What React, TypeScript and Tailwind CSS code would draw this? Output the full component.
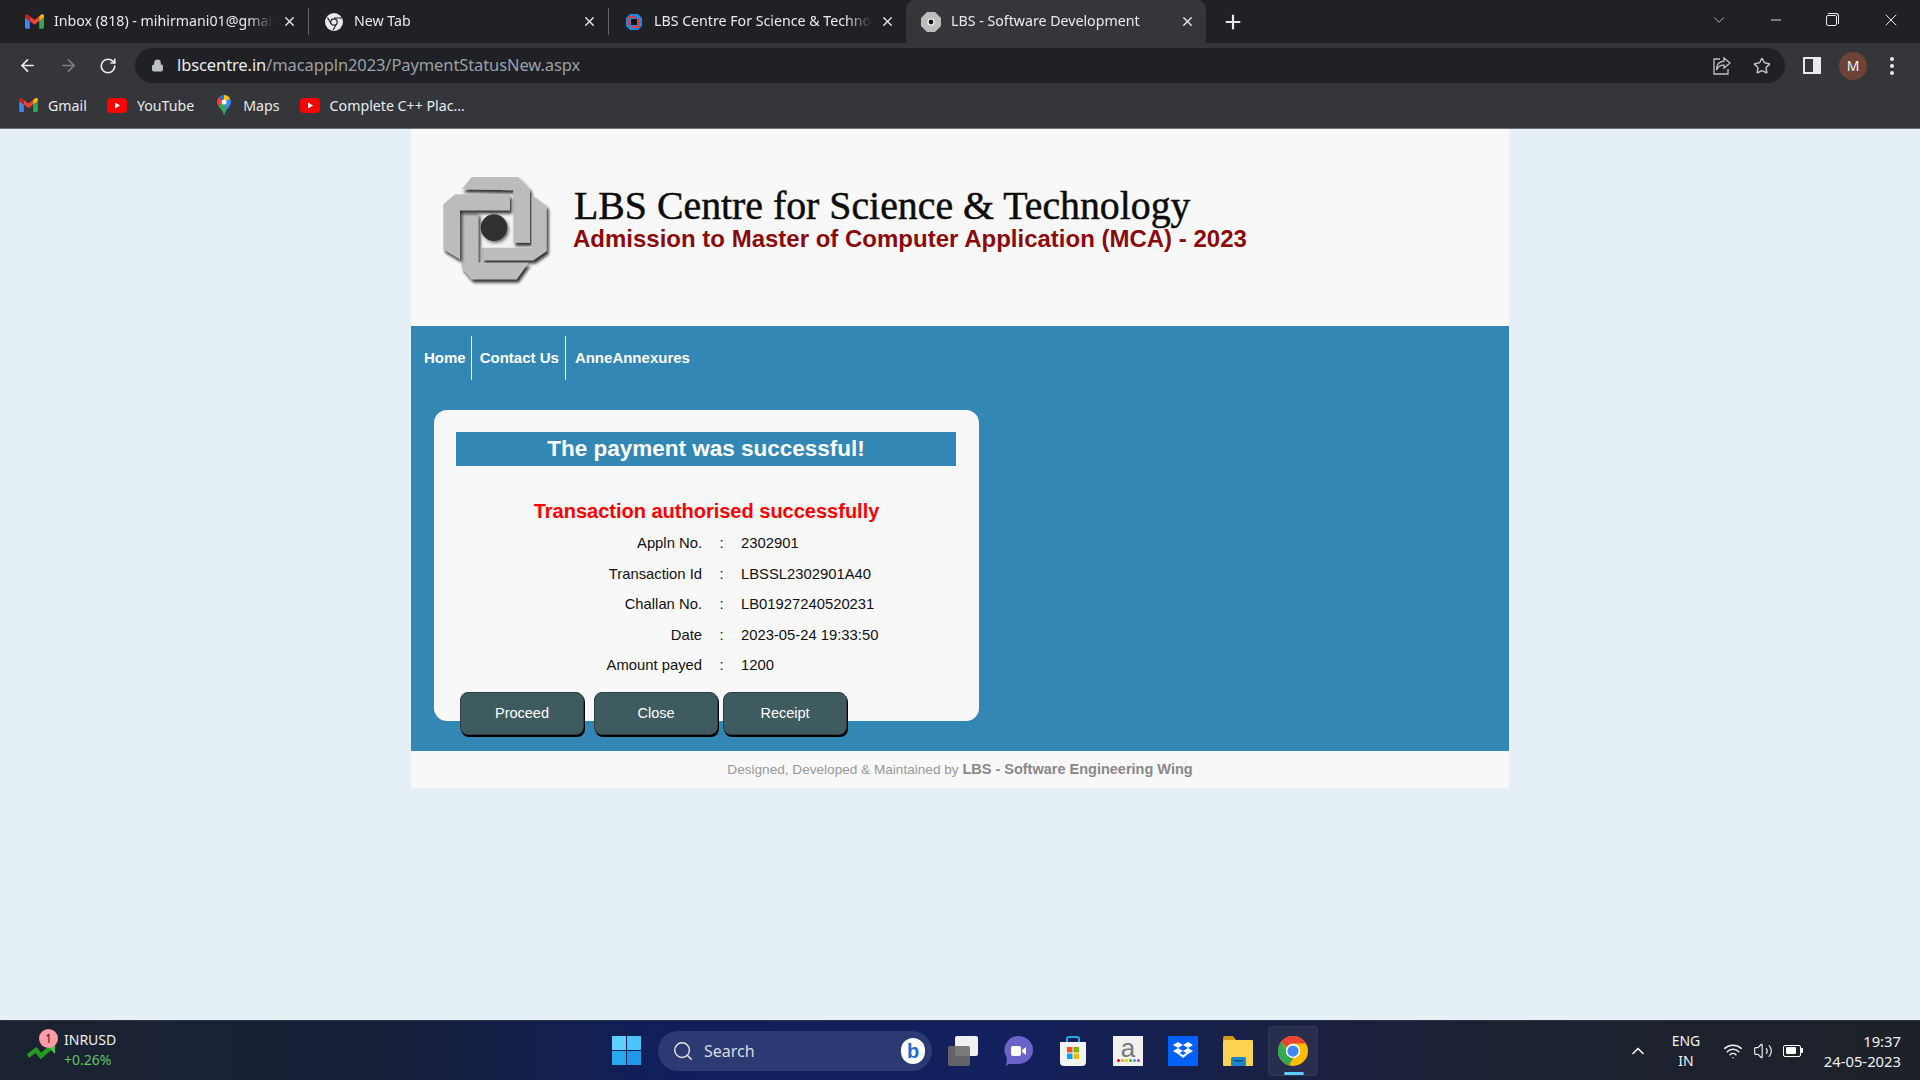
import React from 'react';
import { ArrowLeft, ArrowRight, RotateCw, Lock, X, Plus, ChevronDown, ChevronUp, Minus, Star, Search, Wifi, Volume2 } from 'lucide-react';

const uiFont = "font-['Noto_Sans',sans-serif]";
const arial = "font-['Liberation_Sans',Arial,sans-serif]";

const GmailIcon = ({ className }: { className?: string }) => (
  <svg viewBox="0 0 24 18" className={className}>
    <path d="M1.6 18A1.6 1.6 0 0 1 0 16.4V4l6 4.5V18z" fill="#4285f4" />
    <path d="M18 18V8.5L24 4v12.4a1.6 1.6 0 0 1-1.6 1.6z" fill="#34a853" />
    <path d="M18 2.5 12 7 6 2.5v6L12 13l6-4.5z" fill="#ea4335" />
    <path d="M18 2.5V8.500L24 4V2c0-2-2.200-2.700-3.600-1.600z" fill="#fbbc04" />
    <path d="M0 4V2C0 0 2.200-.7 3.600.4L6 2.500v6z" fill="#c5221f" />
  </svg>
);

const YoutubeIcon = () => (
  <svg viewBox="0 0 20 15" className="w-[20px] h-[15px]">
    <rect width="20" height="15" rx="4" fill="#f00" />
    <path d="M8 4.500 13 7.500 8 10.500z" fill="#fff" />
  </svg>
);

const MapsIcon = () => (
  <span className="flex justify-center w-[18px]">
    <svg viewBox="0 0 14 20" className="w-[14px] h-[20px]">
      <path d="M7 0a7 7 0 0 1 7 7c0 4-5 7-7 13z" fill="#4285f4" />
      <path d="M7 0a7 7 0 0 0-5 2.100L7 7z" fill="#1a73e8" />
      <path d="M2 2.100A7 7 0 0 0 0 7c0 1.500.6 2.700 1.400 4L7 7z" fill="#ea4335" />
      <path d="M1.400 11C3 13.500 6 16 7 20c.4-1.600 1.200-3 2-4.200L7 7z" fill="#34a853" />
      <path d="M7 0a7 7 0 0 1 6 3.500L7 7z" fill="#fbbc04" />
      <circle cx="7" cy="7" r="2.500" fill="#fff" />
    </svg>
  </span>
);

const ChromeLogo = ({ className }: { className?: string }) => (
  <svg viewBox="0 0 48 48" className={className}>
    <circle cx="24" cy="24" r="24" fill="#fbbc04" />
    <path d="M24 0a24 24 0 0 1 20.800 12H24a12 12 0 0 0-11 7.200L5.500 8.500A24 24 0 0 1 24 0z" fill="#ea4335" />
    <path d="M5.500 8.500 16 26.500a10 10 0 0 0 8 9.500L17 47A24 24 0 0 1 5.500 8.500z" fill="#34a853" />
    <circle cx="24" cy="24" r="11.500" fill="#fff" />
    <circle cx="24" cy="24" r="9" fill="#4285f4" />
  </svg>
);

const WhiteChrome = () => (
  <svg viewBox="0 0 18 18" className="w-[18px] h-[18px]">
    <circle cx="9" cy="9" r="9" fill="#e8eaed" />
    <circle cx="9" cy="9" r="3.800" fill="#202124" />
    <circle cx="9" cy="9" r="2.600" fill="#e8eaed" />
    <path d="M9 5h8M6 10.500 2.500 4.500M11.500 11 8 17" stroke="#202124" strokeWidth="1.200" />
  </svg>
);

const LbsFavicon = () => (
  <svg viewBox="0 0 18 18" className="w-[18px] h-[18px]">
    <path d="M5 1h8l4 4v8l-4 4H5l-4-4V5z" fill="#1e88e5" />
    <path d="M5 3h6v2H5v8H3V5z" fill="#e53935" />
    <path d="M13 5h2v8l-2 2H7v-2h6z" fill="#e53935" />
    <rect x="6" y="6" width="6" height="6" fill="#111" />
  </svg>
);

const LbsTabIcon = () => (
  <svg viewBox="0 0 20 20" className="w-[20px] h-[20px]">
    <path d="M6 0h8l6 6v8l-6 6H6l-6-6V6z" fill="#bdbdbd" />
    <circle cx="10" cy="10" r="3.500" fill="#fff" />
    <circle cx="10" cy="10" r="2.400" fill="#111" />
  </svg>
);

const LbsLogo = () => (
  <svg viewBox="0 0 390 390" className="w-[130px] h-[130px] shrink-0">
    <defs>
      <filter id="soft" x="-20%" y="-20%" width="150%" height="150%">
        <feGaussianBlur stdDeviation="5" />
      </filter>
      <filter id="arm" x="-20%" y="-20%" width="150%" height="150%">
        <feDropShadow dx="6" dy="10" stdDeviation="4" floodColor="#111" floodOpacity="0.85" />
      </filter>
    </defs>
    <rect x="145" y="150" width="105" height="110" fill="#f2f2f2" />
    <g fill="#bcbcbc" filter="url(#arm)">
      <path d="M95 85 125 48H265L300 85V245H250V88Z" />
    </g>
    <g fill="#bcbcbc" filter="url(#arm)">
      <path d="M155 260H305V102L350 135V270L310 298H155Z" />
    </g>
    <g fill="#bcbcbc" filter="url(#arm)">
      <path d="M95 155H145V305H295L260 355H125L95 320Z" />
    </g>
    <g fill="#bcbcbc" filter="url(#arm)">
      <path d="M40 130 75 100H240V148H90V295L40 265Z" />
    </g>
    <circle cx="197" cy="206" r="40" fill="#777" filter="url(#soft)" />
    <circle cx="192" cy="200" r="40" fill="#333031" />
  </svg>
);

interface TabProps {
  icon: React.ReactNode;
  title: string;
  active?: boolean;
  width: string;
}

const Tab: React.FC<TabProps> = ({ icon, title, active, width }) => (
  <div className={`relative flex items-center h-[43px] pl-[15px] pr-[11px] ${width} ${active ? 'bg-[#35363a] rounded-t-[9px] mt-0' : ''}`}>
    <span className="w-[20px] flex justify-center shrink-0">{icon}</span>
    <span className="ml-[10px] mb-[2px] flex-1 min-w-0 overflow-hidden whitespace-nowrap text-[14.2px] text-[#e8eaed] [mask-image:linear-gradient(to_right,#000_88%,transparent)]">{title}</span>
    <X className="w-[15px] h-[15px] text-[#e8eaed] shrink-0 ml-[8px]" strokeWidth={2.2} />
  </div>
);

const Divider = () => <div className="w-px h-[27px] bg-[#5f6368] shrink-0" />;

const Bookmark = ({ icon, label, gap }: { icon: React.ReactNode; label: string; gap: string }) => (
  <div className={`flex items-center gap-[10px] ${gap}`}>
    {icon}
    <span className="text-[14.2px] text-[#e8eaed] whitespace-nowrap">{label}</span>
  </div>
);

const BrowserChrome = () => (
  <div className={uiFont}>
    {/* Tabs */}
    <div className="flex items-center h-[43px] bg-[#202124] pl-[9px]">
      <Tab icon={<GmailIcon className="w-[19px] h-[15px]" />} title="Inbox (818) - mihirmani01@gmail.com" width="w-[299px]" />
      <Divider />
      <Tab icon={<WhiteChrome />} title="New Tab" width="w-[299px]" />
      <Divider />
      <Tab icon={<LbsFavicon />} title="LBS Centre For Science & Technology" width="w-[297px]" />
      <Tab icon={<LbsTabIcon />} title="LBS - Software Development" active width="w-[300px]" />
      <Plus className="w-[22px] h-[22px] text-[#e8eaed] ml-[16px]" strokeWidth={2.4} />
      <div className="flex-1" />
      <ChevronDown className="w-[18px] h-[18px] text-[#bdc1c6] mr-[40px] mb-[4px]" strokeWidth={1.2} />
      <Minus className="w-[16px] h-[16px] text-[#e8eaed] mr-[42px] mb-[4px]" strokeWidth={1.4} />
      <div className="relative w-[13px] h-[13px] mr-[42px] mb-[4px]">
        <div className="absolute left-0 bottom-0 w-[11px] h-[11px] border border-[#e8eaed] rounded-[2px]" />
        <div className="absolute right-0 top-0 w-[11px] h-[11px] border-t border-r border-[#e8eaed] rounded-tr-[3px]" />
      </div>
      <X className="w-[20px] h-[20px] text-[#e8eaed] mr-[19px] mb-[4px]" strokeWidth={1.2} />
    </div>
    {/* Toolbar */}
    <div className="flex items-center h-[45px] bg-[#35363a] pl-[18px]">
      <ArrowLeft className="w-[19px] h-[19px] text-[#e8eaed]" strokeWidth={2.2} />
      <ArrowRight className="w-[19px] h-[19px] text-[#7c7f84] ml-[22px]" strokeWidth={2.2} />
      <RotateCw className="w-[18px] h-[18px] text-[#e8eaed] ml-[21px]" strokeWidth={2.2} />
      <div className="flex items-center w-[1650px] h-[35px] ml-[18px] rounded-full bg-[#202124] pl-[16px] pr-[14px]">
        <Lock className="w-[13px] h-[13px] text-[#bdc1c6] fill-[#bdc1c6]" />
        <span className="ml-[13px] text-[16.5px] text-[#e8eaed] tracking-[-0.1px]">
          lbscentre.in<span className="text-[#9aa0a6]">/macappln2023/PaymentStatusNew.aspx</span>
        </span>
        <div className="flex-1" />
        <svg viewBox="0 0 20 20" className="w-[20px] h-[20px] text-[#bdc1c6]" fill="none" stroke="currentColor" strokeWidth="1.300">
          <path d="M8 3H2v15h14v-5" />
          <path d="M12 2l6 5-6 5V9.200C8.500 9.200 6 10.500 4.500 14c0-5 2.500-8.500 7.500-8.800z" />
        </svg>
        <Star className="w-[18px] h-[18px] text-[#bdc1c6] ml-[21px]" strokeWidth={2} />
      </div>
      <div className="flex w-[18px] h-[17px] bg-[#e8eaed] ml-[18px] p-[2px] pr-[8px]">
        <div className="flex-1 bg-[#35363a]" />
      </div>
      <div className="flex items-center justify-center w-[28px] h-[28px] rounded-full bg-[#6d4237] text-[#f1f3f4] text-[14px] ml-[18px]">M</div>
      <div className="flex flex-col gap-[3px] ml-[23px]">
        <span className="w-[4px] h-[4px] rounded-full bg-[#e8eaed]" />
        <span className="w-[4px] h-[4px] rounded-full bg-[#e8eaed]" />
        <span className="w-[4px] h-[4px] rounded-full bg-[#e8eaed]" />
      </div>
    </div>
    {/* Bookmarks */}
    <div className="flex items-center h-[41px] bg-[#35363a] pl-[19px] pb-[5px] border-b border-[#6e7175]">
      <Bookmark icon={<GmailIcon className="w-[19px] h-[14px]" />} label="Gmail" gap="mr-[20px]" />
      <Bookmark icon={<YoutubeIcon />} label="YouTube" gap="mr-[21px]" />
      <Bookmark icon={<MapsIcon />} label="Maps" gap="mr-[20px]" />
      <Bookmark icon={<YoutubeIcon />} label="Complete C++ Plac..." gap="" />
    </div>
  </div>
);

const rows = [
  ['Appln No.', '2302901'],
  ['Transaction Id', 'LBSSL2302901A40'],
  ['Challan No.', 'LB01927240520231'],
  ['Date', '2023-05-24 19:33:50'],
  ['Amount payed', '1200'],
];

const PageButton = ({ label, className }: { label: string; className?: string }) => (
  <button className={`w-[124px] h-[43px] pt-[2px] bg-[#3e5b5f] rounded-[8px] border border-[#2c3f42] shadow-[1px_2px_0_#000] text-white text-[14.5px] ${className ?? ''}`}>
    {label}
  </button>
);

const Page = () => (
  <div className={`flex-1 bg-[#e4f0f6] ${arial}`}>
    <div className="w-[1098px] ml-[411px]">
      {/* Header */}
      <div className="flex items-start h-[197px] bg-[#f8f8f8] pl-[19px] pt-[32px]">
        <LbsLogo />
        <div className="ml-[13px] mt-[25px]">
          <div className="font-['Liberation_Serif',serif] text-[39.8px] leading-[40px] text-[#0c0c0c] ml-[1px] [-webkit-text-stroke:0.5px_#0c0c0c] whitespace-nowrap">LBS Centre for Science &amp; Technology</div>
          <div className="font-bold text-[24px] leading-[26px] text-[#8b0a0a] whitespace-nowrap">Admission to Master of Computer Application (MCA) - 2023</div>
        </div>
      </div>
      {/* Nav + content */}
      <div className="h-[425px] bg-[#3387b5] pt-[10px]">
        <div className="flex h-[44px] items-center text-white font-bold text-[15px]">
          <div className="flex items-center h-full pl-[13px] pr-[5px] border-r border-white">Home</div>
          <div className="flex items-center h-full pl-[8px] pr-[6px] border-r border-white">Contact Us</div>
          <div className="pl-[9px]">AnneAnnexures</div>
        </div>
        <div className="w-[545px] h-[311px] ml-[23px] mt-[30px] bg-[#f8f8f8] rounded-[13px] pt-[22px]">
          <div className="h-[34px] ml-[22px] mr-[23px] bg-[#3387b5] text-center text-white font-bold text-[22.5px] leading-[33px]">The payment was successful!</div>
          <div className="mt-[32px] text-center text-[#ff0000] font-bold text-[20px] leading-[26px]">Transaction authorised successfully</div>
          <div className="mt-[4px] text-[14.8px] text-[#111]">
            {rows.map(([label, value]) => (
              <div key={label} className="grid grid-cols-[268px_39px_1fr] h-[30.5px] items-center">
                <span className="text-right">{label}</span>
                <span className="text-center">:</span>
                <span>{value}</span>
              </div>
            ))}
          </div>
          <div className="flex ml-[26px] mt-[11px]">
            <PageButton label="Proceed" className="mr-[10px]" />
            <PageButton label="Close" className="mr-[5px]" />
            <PageButton label="Receipt" />
          </div>
        </div>
      </div>
      {/* Footer */}
      <div className="flex items-center justify-center h-[37px] pt-[1px] bg-[#f8f8f8] text-[13.6px] text-[#999]">
        <span>Designed, Developed &amp; Maintained by <b className="text-[14.5px] text-[#888]">LBS - Software Engineering Wing</b></span>
      </div>
    </div>
  </div>
);

const StoreIcon = () => (
  <svg viewBox="0 0 30 30" className="w-[30px] h-[30px]">
    <path d="M9 7V3a2 2 0 0 1 2-2h8a2 2 0 0 1 2 2v4" fill="none" stroke="#27a9e6" strokeWidth="2" />
    <path d="M2 6h26v20a4 4 0 0 1-4 4H6a4 4 0 0 1-4-4z" fill="#f4f4f4" />
    <rect x="9" y="11" width="5.500" height="5.500" fill="#f25022" />
    <rect x="15.500" y="11" width="5.500" height="5.500" fill="#7fba00" />
    <rect x="9" y="17.500" width="5.500" height="5.500" fill="#00a4ef" />
    <rect x="15.500" y="17.500" width="5.500" height="5.500" fill="#ffb900" />
  </svg>
);

const AmazonIcon = () => (
  <div className={`relative flex justify-center w-[30px] h-[30px] bg-[#f1f1f1] ${arial}`}>
    <span className="text-[#777] text-[26px] leading-[24px]">a</span>
    <div className="absolute bottom-[4px] flex gap-[1px]">
      <span className="w-[3px] h-[3px] rounded-full bg-[#e00]" />
      <span className="w-[3px] h-[3px] rounded-full bg-[#f90]" />
      <span className="w-[3px] h-[3px] rounded-full bg-[#dc0]" />
      <span className="w-[3px] h-[3px] rounded-full bg-[#3b3]" />
      <span className="w-[3px] h-[3px] rounded-full bg-[#39f]" />
      <span className="w-[3px] h-[3px] rounded-full bg-[#a3e]" />
    </div>
  </div>
);

const Taskbar = () => (
  <div className={`flex items-center h-[60px] border-t border-[#2c3340] bg-[linear-gradient(to_right,#1b2330_0%,#18203a_20%,#101f5c_35%,#12205e_52%,#1a2040_68%,#1c2230_80%,#1d2129_100%)] ${uiFont}`}>
    {/* Ticker widget */}
    <div className="relative flex items-center w-[612px] h-full shrink-0 pl-[64px] pb-[2px]">
      <svg viewBox="0 0 28 15" className="absolute left-[27px] top-[23px] w-[28px] h-[15px]">
        <path d="M1 12 9 6l5 6 9-8" fill="none" stroke="#259a25" strokeWidth="4.500" />
        <path d="M18 0h10v10z" fill="#4cc23a" />
      </svg>
      <div className="absolute left-[39px] top-[8px] flex items-center justify-center w-[19px] h-[19px] rounded-full bg-[#ff9aa6] text-[#222] text-[12px]">1</div>
      <div className="leading-[20px]">
        <div className="text-[14px] text-[#f0f0f0]">INRUSD</div>
        <div className="text-[14px] text-[#5cc65c]">+0.26%</div>
      </div>
    </div>
    {/* Pinned apps */}
    <div className="flex items-center w-[706px] h-full shrink-0">
      <div className="grid grid-cols-2 gap-[1px] w-[29px] h-[29px] shrink-0">
        <span className="bg-[#5fd0fb]" />
        <span className="bg-[#4cc4f8]" />
        <span className="bg-[#2aa8ee]" />
        <span className="bg-[#1f98e6]" />
      </div>
      <div className="flex items-center w-[274px] h-[40px] ml-[17px] rounded-full bg-[#2b3a72] pl-[14px] pr-[7px] shrink-0">
        <Search className="w-[22px] h-[22px] text-[#e6e6e6]" strokeWidth={1.6} />
        <span className="ml-[10px] text-[16px] text-[#d8dbe6]">Search</span>
        <div className="flex-1" />
        <div className="flex items-center justify-center w-[24px] h-[26px] rounded-full bg-white">
          <span className={`text-[#1b6fd6] font-bold text-[20px] leading-[20px] ${arial}`}>b</span>
        </div>
      </div>
      <div className="relative w-[30px] h-[30px] ml-[16px] shrink-0">
        <div className="absolute right-0 top-0 w-[23px] h-[20px] bg-[#f0f0f0] rounded-[2px]" />
        <div className="absolute left-0 bottom-0 w-[22px] h-[20px] bg-[#6b6b6b]/90 rounded-[2px]" />
      </div>
      <svg viewBox="0 0 30 30" className="w-[30px] h-[30px] ml-[25px] shrink-0">
        <path d="M15 0a15 14 0 0 1 0 28H6l-3 2 1-8A14 14 0 0 1 15 0z" fill="#6a63c8" />
        <rect x="8" y="10" width="10" height="10" rx="2" fill="#fff" />
        <path d="M19 14l4-3v8l-4-3z" fill="#fff" />
      </svg>
      <div className="ml-[25px] shrink-0"><StoreIcon /></div>
      <div className="ml-[25px] shrink-0"><AmazonIcon /></div>
      <svg viewBox="0 0 30 30" className="w-[30px] h-[30px] ml-[25px] shrink-0">
        <rect width="30" height="30" fill="#0061fe" />
        <path d="M10 6l5 3-5 3-5-3zM20 6l5 3-5 3-5-3zM10 12l5 3-5 3-5-3zM20 12l5 3-5 3-5-3zM15 19l5-3 0 2-5 4-5-4 0-2z" fill="#fff" />
      </svg>
      <svg viewBox="0 0 30 30" className="w-[30px] h-[30px] ml-[25px] shrink-0">
        <path d="M0 2a2 2 0 0 1 2-2h8l3 4H0z" fill="#d39a14" />
        <rect y="4" width="30" height="26" rx="1" fill="#fbd251" />
        <rect x="8" y="21" width="15" height="9" rx="1.500" fill="#1b85c9" />
        <rect x="11" y="24" width="9" height="1.500" fill="#0c4f80" />
      </svg>
      <div className="relative flex items-center justify-center w-[50px] h-[50px] ml-[15px] rounded-[4px] bg-[#ffffff10] border border-[#ffffff0c] shrink-0">
        <ChromeLogo className="w-[30px] h-[30px]" />
        <div className="absolute left-[15px] bottom-[0px] w-[20px] h-[3px] rounded-full bg-[#60cdff]" />
      </div>
    </div>
    {/* Tray */}
    <div className="flex items-center flex-1 text-[#f0f0f0]">
      <ChevronUp className="w-[20px] h-[20px] ml-[310px]" strokeWidth={2} />
      <div className="ml-[23px] w-[30px] text-center text-[14px] leading-[20px]">
        <div>ENG</div>
        <div>IN</div>
      </div>
      <Wifi className="w-[20px] h-[20px] ml-[22px]" strokeWidth={1.8} />
      <Volume2 className="w-[20px] h-[20px] ml-[10px]" strokeWidth={1.4} />
      <div className="flex items-center ml-[10px]">
        <div className="w-[18px] h-[12px] border border-white rounded-[2px] p-[1.5px]">
          <div className="w-[10px] h-full bg-white rounded-[1px]" />
        </div>
        <div className="w-[2px] h-[5px] bg-white" />
      </div>
      <div className="flex-1 text-right text-[14.8px] leading-[20px] pr-[19px]">
        <div>19:37</div>
        <div>24-05-2023</div>
      </div>
    </div>
  </div>
);

const App: React.FC = () => (
  <div className="flex flex-col w-[1920px] h-[1080px] overflow-hidden">
    <BrowserChrome />
    <Page />
    <Taskbar />
  </div>
);

export default App;
